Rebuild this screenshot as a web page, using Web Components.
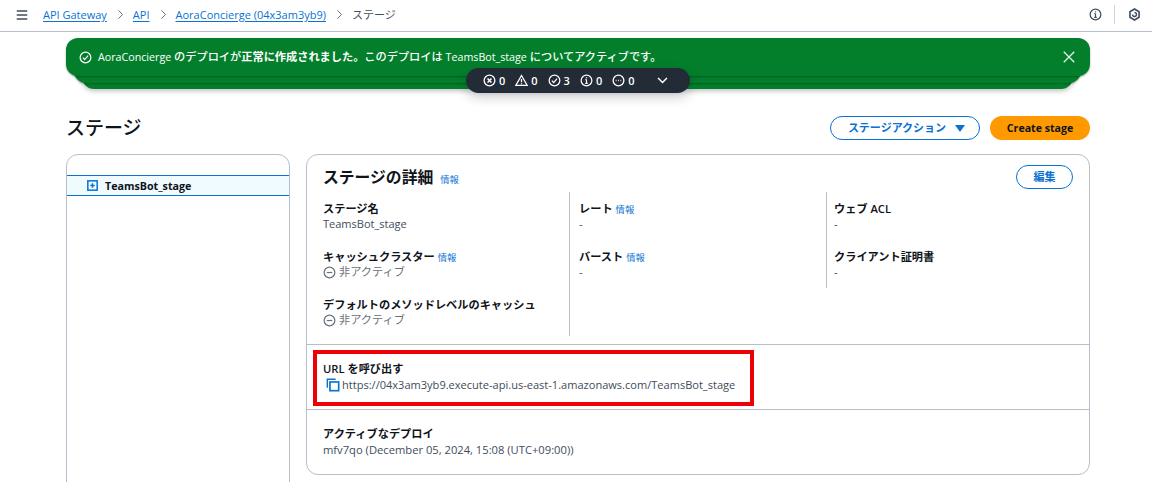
<!DOCTYPE html>
<html lang="ja"><head><meta charset="utf-8"><title>ステージ</title>
<style>
html,body{margin:0;padding:0;background:#fff;height:482px;overflow:hidden}
body{font:11.2px/16px "Open Sans","Noto Sans CJK JP",sans-serif;color:#0f141a}
</style></head><body>
<aws-console>
  <top-bar></top-bar>
  <flash-stack></flash-stack>
  <page-head></page-head>
  <split-view>
    <stage-tree slot="left"></stage-tree>
    <stage-details slot="right"></stage-details>
  </split-view>
</aws-console>
<script>
const ICONS={
 menu:'<path d="M2 3.5h12M2 8h12M2 12.5h12" stroke-width="1.7"/>',
 chev:'<path d="M5 2l6 6-6 6" stroke-width="1.4"/>',
 info:'<circle cx="8" cy="8" r="6.6" stroke-width="1.5"/><path d="M8 7v4.5M6.4 11.5h3.2M6.6 7H8" stroke-width="1.4"/><path d="M8 4.1v1.3" stroke-width="1.7"/>',
 hex:'<path d="M8 1.3l5.6 3.3v6.8L8 14.7l-5.6-3.3V4.6z" stroke-width="2"/><path d="M5.6 8A2.4 2.4 0 1 0 8 5.6" stroke-width="1.7"/>',
 check:'<circle cx="8" cy="8" r="6.6" stroke-width="1.5"/><path d="M4.8 8.2l2.2 2.3 4.2-4.7" stroke-width="1.5"/>',
 x:'<path d="M2 2l12 12M14 2L2 14" stroke-width="1.5"/>',
 xc:'<circle cx="8" cy="8" r="6.6" stroke-width="1.6"/><path d="M5.6 5.6l4.8 4.8M10.4 5.6l-4.8 4.8" stroke-width="2"/>',
 warn:'<path d="M8 1.8L15 14H1z" stroke-width="1.5"/><path d="M8 6v4.2M8 11.3v1.3" stroke-width="1.6"/>',
 dots:'<circle cx="8" cy="8" r="6.6" stroke-width="1.6"/><path d="M4.6 8h1M7.5 8h1M10.4 8h1" stroke-width="1.8"/>',
 down:'<path d="M2.5 5l5.5 5.5L13.500 5" stroke-width="1.8"/>',
 minus:'<circle cx="8" cy="8" r="6.6" stroke-width="1.5"/><path d="M4.6 8h6.800" stroke-width="1.500"/>',
 copy:'<path d="M1.500 11V1.500H11" stroke-width="1.600"/><rect x="4.500" y="4.500" width="10" height="10" stroke-width="1.900"/>',
 plus:'<rect x="1.200" y="1.200" width="13.600" height="13.600" stroke-width="2.200"/><path d="M8 4.800v6.400M4.800 8h6.400" stroke-width="2.200"/>'
};
function el(name,html,css){
  customElements.define(name,class extends HTMLElement{
    constructor(){super();this.attachShadow({mode:'open'}).innerHTML='<style>'+css+'</style>'+html;}
  });
}
class UiIcon extends HTMLElement{
  static get observedAttributes(){return['name','size']}
  constructor(){super();this.attachShadow({mode:'open'})}
  connectedCallback(){this.render()}
  attributeChangedCallback(){this.render()}
  render(){
    const s=this.getAttribute('size')||13,n=this.getAttribute('name');
    this.shadowRoot.innerHTML=`<style>:host{display:inline-flex;flex:none;width:${s}px;height:${s}px}svg{display:block;width:100%;height:100%;fill:none;stroke:currentColor;stroke-width:1.3}</style><svg viewBox="0 0 16 16">${ICONS[n]||''}</svg>`;
  }
}
customElements.define('ui-icon',UiIcon);

el('aws-console','<slot></slot>',':host{display:block;width:1152px;height:482px;overflow:hidden}');

el('top-bar',`
  <ui-icon name="menu" size="14" style="color:#414d5c"></ui-icon>
  <nav><a>API Gateway</a><ui-icon class="c" name="chev" size="11"></ui-icon><a>API</a><ui-icon class="c" name="chev" size="11"></ui-icon><a>AoraConcierge (04x3am3yb9)</a><ui-icon class="c" name="chev" size="11"></ui-icon><span>ステージ</span></nav>
  <div class="r"><ui-icon name="info" size="13"></ui-icon><i></i><ui-icon name="hex" size="13"></ui-icon></div>`,
`:host{display:flex;align-items:center;box-sizing:border-box;height:32px;padding:0 11px 2px 15px;border-bottom:1px solid #b6bec9;background:#fff;color:#414d5c}
nav{display:flex;align-items:center;margin-left:14px;flex:1;font-size:11px}
a{color:#0972d3;text-decoration:underline;text-underline-offset:2px}
.c{margin:0 7px 0 8px;color:#5f6b7a}
span{color:#414d5c}
.r{display:flex;align-items:center;color:#414d5c}
i{display:block;width:1px;height:19px;background:#d1d5db;margin:0 13px 0 12px}`);

el('flash-stack',`
  <div class="l3"></div><div class="l2"></div>
  <div class="main"><ui-icon name="check" size="13"></ui-icon><span class="t"><u>AoraConcierge</u> のデプロイが<b>正常に作成されました。</b>このデプロイは <u>TeamsBot_stage</u> についてアクティブです。</span><ui-icon class="x" name="x" size="14"></ui-icon></div>
  <status-pill></status-pill>`,
`:host{display:block;position:relative;height:51px;margin:6px 62px 0 66px;color:#fff}
.main,.l2,.l3{position:absolute;background:#037f2c}
.main{left:0;right:0;top:0;height:38px;border-radius:12px;display:flex;align-items:center;box-sizing:border-box;padding:0 14px 0 13px;box-shadow:0 1px 2px rgba(0,40,10,.4)}
.l2{left:8px;right:9px;top:20px;height:25px;border-radius:0 0 12px 12px;box-shadow:0 1px 2px rgba(0,40,10,.4)}
.l3{left:16px;right:17px;top:26px;height:25px;border-radius:0 0 12px 12px;box-shadow:0 2px 5px rgba(0,0,0,.25)}
.t{flex:1;margin-left:6px;font-size:11.2px;font-weight:500}
u{text-decoration:none;font-size:10.7px}
b{font-weight:700}
.x{color:#e8f3ec}
status-pill{position:absolute;left:400px;top:30px}`);

el('status-pill',`
  <span><ui-icon name="xc" size="13"></ui-icon>0</span><span><ui-icon name="warn" size="13"></ui-icon>0</span><span><ui-icon name="check" size="13"></ui-icon>3</span><span><ui-icon name="info" size="13"></ui-icon>0</span><span><ui-icon name="dots" size="13"></ui-icon>0</span>
  <ui-icon class="d" name="down" size="13"></ui-icon>`,
`:host{display:flex;align-items:center;box-sizing:border-box;width:224px;height:25px;padding-left:17px;background:#232b37;border-radius:12.5px;color:#fff;box-shadow:0 4px 12px rgba(0,20,40,.22);font-size:11px;font-weight:600}
span{display:inline-flex;align-items:center;gap:3px;margin-right:10px}
.d{margin-left:12px}`);

el('page-head',`
  <h1>ステージ</h1>
  <button class="n">ステージアクション<em></em></button>
  <button class="p">Create stage</button>`,
`:host{display:flex;align-items:center;height:24px;margin:27px 62px 14px 66px}
h1{flex:1;margin:0;font-size:19px;line-height:24px;font-weight:500;color:#0f141a}
button{font:700 11px/16px "Open Sans","Noto Sans CJK JP",sans-serif;height:24px;border-radius:12px;box-sizing:border-box;display:flex;align-items:center;justify-content:center;padding:0}
.n{width:150px;background:#fff;color:#0972d3;border:1px solid #0972d3;margin-right:10px}
.p{width:100px;background:#ff9900;color:#0f141a;border:0;font-size:10.6px}
em{display:block;width:0;height:0;border:5px solid transparent;border-top:7px solid #0972d3;border-bottom:0;margin-left:9px;margin-right:-3px}`);

el('split-view','<slot name="left"></slot><slot name="right"></slot>',
`:host{display:flex;align-items:flex-start;gap:16px;margin:0 62px 0 66px}`);

el('stage-tree',`<div class="row"><ui-icon name="plus" size="11"></ui-icon><b>TeamsBot_stage</b></div>`,
`:host{display:block;box-sizing:border-box;width:224px;height:360px;border:1px solid #b6bec9;border-radius:12px;padding-top:20px}
.row{display:flex;align-items:center;height:21px;box-sizing:border-box;border-top:1px solid #0972d3;border-bottom:1px solid #0972d3;background:#f0fbff;padding-left:20px;color:#0f141a}
ui-icon{color:#0972d3;margin-right:7px}
b{font-size:10.7px;font-weight:700}`);

el('info-link','情報',`:host{display:inline;color:#0972d3;font-size:9.3px;font-weight:400;margin-left:3px}`);

el('kv-field',`<div class="k"><slot name="k"></slot></div><div class="v"><slot></slot></div>`,
`:host{display:block;margin-bottom:16px}
.k{font-weight:600;color:#0f141a;height:16px;box-sizing:border-box;padding-top:var(--kpad,1px)}
.v{color:#414d5c;height:16px}`);

el('status-off',`<ui-icon name="minus" size="13"></ui-icon><slot></slot>`,
`:host{display:inline-flex;align-items:center;gap:3px;color:#687078}`);

el('stage-details',`
  <section class="top">
    <div class="head"><h2>ステージの詳細<info-link style="margin-left:7px"></info-link></h2><button>編集</button></div>
    <div class="grid">
      <div class="c1">
        <kv-field><span slot="k">ステージ名</span><span class="n">TeamsBot_stage</span></kv-field>
        <kv-field><span slot="k">キャッシュクラスター<info-link></info-link></span><status-off>非アクティブ</status-off></kv-field>
        <kv-field><span slot="k">デフォルトのメソッドレベルのキャッシュ</span><status-off>非アクティブ</status-off></kv-field>
      </div>
      <div class="c2">
        <kv-field><span slot="k">レート<info-link></info-link></span>-</kv-field>
        <kv-field><span slot="k">バースト<info-link></info-link></span>-</kv-field>
      </div>
      <div class="c3">
        <kv-field><span slot="k">ウェブ ACL</span>-</kv-field>
        <kv-field class="last"><span slot="k">クライアント証明書</span>-</kv-field>
      </div>
    </div>
  </section>
  <section class="url">
    <kv-field class="nomb"><span slot="k">URL を呼び出す</span><span class="link"><ui-icon name="copy" size="14"></ui-icon>https://04x3am3yb9.execute-api.us-east-1.amazonaws.com/TeamsBot_stage</span></kv-field>
    <div class="red"></div>
  </section>
  <section class="dep">
    <kv-field class="nomb"><span slot="k">アクティブなデプロイ</span>mfv7qo (December 05, 2024, 15:08 (UTC+09:00))</kv-field>
  </section>`,
`:host{display:block;box-sizing:border-box;width:784px;height:321px;border:1px solid #b6bec9;border-radius:12px;--kpad:1px}
.top{height:189px;box-sizing:border-box;padding:9px 16px 0 16px}
.head{display:flex;justify-content:space-between;align-items:flex-start;height:28px}
h2{margin:1px 0 0;font-size:15.8px;line-height:24px;font-weight:600;color:#0f141a;height:27px}
button{width:57px;height:24px;margin-top:1px;background:#fff;border:1px solid #0972d3;border-radius:12px;color:#0972d3;font:700 11px/16px "Open Sans","Noto Sans CJK JP",sans-serif;padding:0}
.grid{display:grid;grid-template-columns:246px 257px 1fr;align-items:start}
.c1{padding-top:8px}
.n{font-size:11px}
.c2,.c3{padding:8px 0 0 9px;border-left:1px solid #b6bec9;box-sizing:border-box}
.c2{height:144px}
.c3{height:96px;padding-left:7px}
.last,.nomb{margin-bottom:0}
.url{position:relative;height:65px;box-sizing:border-box;border-top:1px solid #b6bec9;padding:16px 16px 0;--kpad:0px}
.link{display:inline-flex;align-items:center;gap:2px;color:#414d5c;margin-left:3px;white-space:nowrap;font-size:11.06px}
.link ui-icon{color:#0972d3}
.red{position:absolute;left:6px;top:5px;width:441px;height:56px;box-sizing:border-box;border:4px solid #ee0008}
.dep{border-top:1px solid #b6bec9;padding:16px 16px 0;--kpad:0px}`);
</script>
</body></html>
